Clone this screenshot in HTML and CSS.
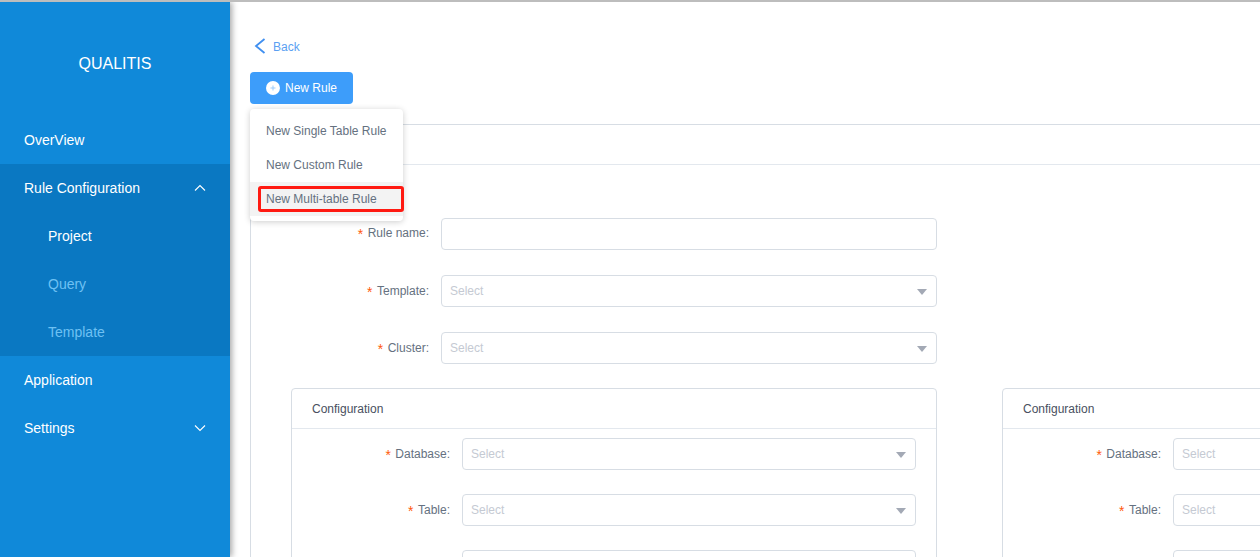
FILE: index.html
```html
<!DOCTYPE html>
<html lang="en">

<head>
  <meta charset="UTF-8">
  <meta name="viewport" content="width=device-width, initial-scale=1.0">
  <title>Qualitis</title>
  <link rel="stylesheet" href="styles.css">
</head>

<body>
  <div class="layout">
    <!-- Sidebar -->
    <aside class="sidebar">
      <div class="logo">QUALITIS</div>
      <nav>
        <a class="nav-item">OverView</a>
        <div class="nav-group">
          <a class="nav-item">Rule Configuration
            <svg class="chevron" width="12" height="12" viewBox="0 0 12 12"><path d="M1 8.500 6 3.500l5 5" /></svg>
          </a>
          <a class="nav-item sub current">Project</a>
          <a class="nav-item sub">Query</a>
          <a class="nav-item sub">Template</a>
        </div>
        <a class="nav-item">Application</a>
        <a class="nav-item">Settings
          <svg class="chevron" width="12" height="12" viewBox="0 0 12 12"><path d="M1 3.500 6 8.500l5-5" /></svg>
        </a>
      </nav>
    </aside>

    <main class="content">
      <a class="back">
        <svg width="12" height="16" viewBox="0 0 12 16"><path d="M10.500 1 2 8l8.500 7" /></svg>
        Back
      </a>

      <!-- New rule button and its open menu -->
      <div class="new-rule">
        <button class="btn-primary" type="button">
          <svg width="14" height="14" viewBox="0 0 14 14">
            <circle cx="7" cy="7" r="7" fill="#fff" />
            <path d="M7 4.500v5M4.500 7h5" stroke="#9ccbfa" stroke-width="1" />
          </svg>
          New Rule
        </button>
        <ul class="menu">
          <li>New Single Table Rule</li>
          <li>New Custom Rule</li>
          <li class="hover">New Multi-table Rule</li>
        </ul>
        <div class="highlight"></div>
      </div>

      <section class="card">
        <div class="card-head"></div>
        <div class="card-body">
          <div class="row row-name">
            <label><span class="req">*</span>Rule name:</label>
            <input class="field" type="text">
          </div>
          <div class="row">
            <label><span class="req">*</span>Template:</label>
            <div class="field select">Select</div>
          </div>
          <div class="row">
            <label><span class="req">*</span>Cluster:</label>
            <div class="field select">Select</div>
          </div>

          <div class="config-list">
            <div class="config">
              <div class="config-head">Configuration</div>
              <div class="row">
                <label><span class="req">*</span>Database:</label>
                <div class="field select">Select</div>
              </div>
              <div class="row">
                <label><span class="req">*</span>Table:</label>
                <div class="field select">Select</div>
              </div>
              <div class="row">
                <label></label>
                <div class="field"></div>
              </div>
            </div>
            <div class="config">
              <div class="config-head">Configuration</div>
              <div class="row">
                <label><span class="req">*</span>Database:</label>
                <div class="field select">Select</div>
              </div>
              <div class="row">
                <label><span class="req">*</span>Table:</label>
                <div class="field select">Select</div>
              </div>
              <div class="row">
                <label></label>
                <div class="field"></div>
              </div>
            </div>
          </div>
        </div>
      </section>
    </main>
  </div>
</body>

</html>
```

FILE: styles.css
```css
* {
  box-sizing: border-box;
}

html, body {
  height: 557px;
  margin: 0;
  overflow: hidden;
}

body {
  font-family: 'Liberation Sans', Arial, sans-serif;
  font-size: 12px;
  color: #657180;
  background: #fff;
  border-top: 2px solid #bdbdbd;
}

.layout {
  display: flex;
  height: 555px;
}

/* Sidebar */
.sidebar {
  flex: none;
  width: 230px;
  background: #1089d9;
  color: #fff;
  font-size: 14px;
  box-shadow: 2px 0 6px rgba(0, 0, 0, 0.35);
  position: relative;
  z-index: 2;
}

.logo {
  height: 114px;
  padding-top: 53px;
  font-size: 16px;
  line-height: 18px;
  text-align: center;
}

.nav-item {
  display: flex;
  align-items: center;
  justify-content: space-between;
  height: 48px;
  padding: 0 24px;
}

.nav-group {
  background: #0a78c2;
}

.nav-item.sub {
  padding-left: 48px;
  color: #6ec1f3;
}

.nav-item.sub.current {
  color: #fff;
}

.chevron {
  fill: none;
  stroke: #fff;
  stroke-width: 1.100;
}

/* Main area */
.content {
  flex: 1;
  min-width: 0;
  padding: 29px 0 0 20px;
}

.back {
  display: flex;
  align-items: center;
  gap: 7px;
  height: 30px;
  padding: 2px 0 0 4px;
  margin-bottom: 11px;
  color: #5b9ff2;
}

.back svg {
  fill: none;
  stroke: #3f8ff0;
  stroke-width: 1.800;
  margin-top: -2px;
}

.new-rule {
  position: relative;
  height: 32px;
  margin-bottom: 20px;
}

.btn-primary {
  display: flex;
  align-items: center;
  gap: 5px;
  width: 103px;
  height: 32px;
  padding: 0 16px;
  border: 0;
  border-radius: 4px;
  background: #3d9dfa;
  color: #fff;
  font: inherit;
  white-space: nowrap;
}

.menu {
  position: absolute;
  top: 37px;
  left: 0;
  z-index: 3;
  width: 153px;
  margin: 0;
  padding: 5px 0;
  list-style: none;
  background: #fff;
  border-radius: 4px;
  box-shadow: 0 1px 6px rgba(0, 0, 0, 0.2);
}

.menu li {
  height: 34px;
  padding: 0 16px;
  line-height: 34px;
  white-space: nowrap;
}

.menu li.hover {
  background: #f3f3f3;
}

.highlight {
  position: absolute;
  top: 114px;
  left: 8px;
  z-index: 4;
  width: 146px;
  height: 26px;
  border: 3px solid #ff1a12;
  border-radius: 3px;
}

/* Rule form */
.card {
  width: 1200px;
  border: 1px solid #d7dde4;
  border-right: 0;
  border-radius: 4px 0 0 0;
}

.card-head {
  height: 40px;
  border-bottom: 1px solid #e3e8ee;
}

.card-body {
  padding: 53px 0 0 40px;
}

.row {
  display: flex;
  align-items: center;
  height: 32px;
  margin-bottom: 25px;
}

.row label {
  flex: none;
  width: 178px;
  margin-left: -40px;
  margin-right: 12px;
  padding-top: 2px;
  text-align: right;
}

.row-name label {
  padding-top: 0;
}

.req {
  margin-right: 3px;
  font-family: 'Liberation Mono', monospace;
  font-size: 14px;
  line-height: 12px;
  vertical-align: -3px;
  color: #ff5a0a;
}

.field {
  flex: none;
  display: block;
  width: 496px;
  height: 32px;
  padding: 0 8px;
  border: 1px solid #d7dde4;
  border-radius: 4px;
  background: #fff;
  font: inherit;
  line-height: 30px;
}

.select {
  position: relative;
  color: #c5cad3;
}

.select::after {
  content: '';
  position: absolute;
  top: 13px;
  right: 9px;
  border-style: solid;
  border-width: 6px 5.500px 0;
  border-color: #a3a9b5 transparent transparent;
}

.config-list {
  display: flex;
  gap: 65px;
  margin-top: -1px;
}

.config {
  flex: none;
  width: 646px;
  border: 1px solid #d7dde4;
  border-radius: 4px;
}

.config-head {
  height: 40px;
  margin-bottom: 9px;
  padding: 1px 0 0 20px;
  line-height: 39px;
  color: #495060;
  border-bottom: 1px solid #e3e8ee;
}

.config .row {
  margin-bottom: 24px;
}

.config .row label {
  width: 158px;
  margin-left: 0;
}

.config .field {
  width: 454px;
}
```
